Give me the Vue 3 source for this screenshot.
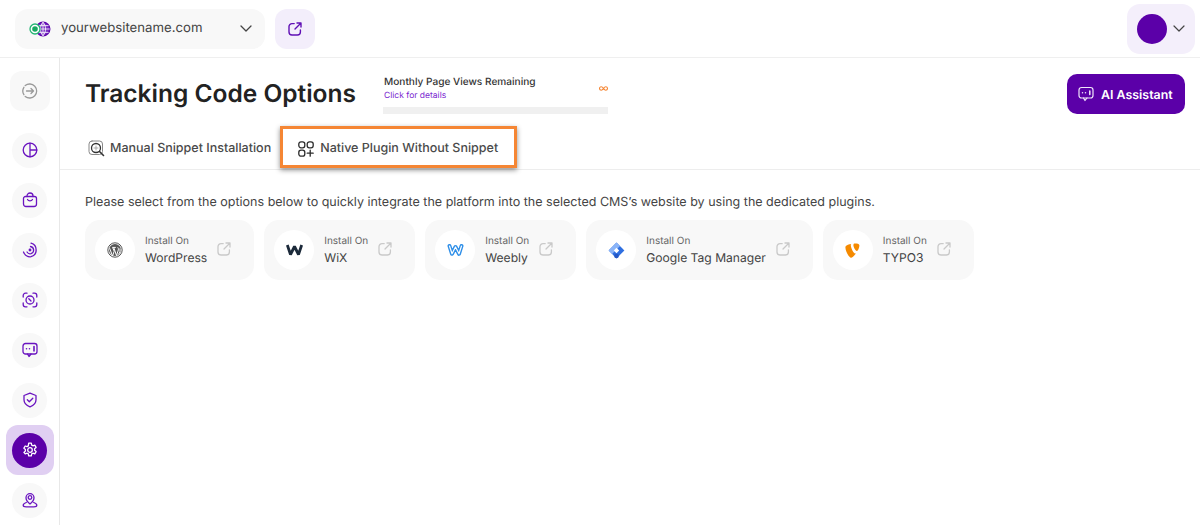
<script setup>
const navIcons = [
  { id: 'pie', active: false },
  { id: 'bag', active: false },
  { id: 'signal', active: false },
  { id: 'scan', active: false },
  { id: 'chat', active: false },
  { id: 'shield', active: false },
  { id: 'gear', active: true },
  { id: 'pin', active: false }
]
const cards = [
  { id: 'wp', name: 'WordPress' },
  { id: 'wix', name: 'WiX' },
  { id: 'weebly', name: 'Weebly' },
  { id: 'gtm', name: 'Google Tag Manager' },
  { id: 'typo', name: 'TYPO3' }
]
</script>

<template>
  <div class="page">
    <header class="topbar">
      <div class="site-select">
        <svg class="globe" width="22" height="16" viewBox="0 0 22 16" fill="none">
          <circle cx="14" cy="8" r="6.8" stroke="#5f08ad" stroke-width="1.4" fill="#7a2fc4"/>
          <path d="M14 1.2v13.6M7.2 8h13.6M8.4 4.6h11.2M8.4 11.4h11.2M14 1.2c-3.4 3.8-3.4 9.8 0 13.6M14 1.2c3.4 3.8 3.4 9.8 0 13.6" stroke="#fff" stroke-width=".8"/>
          <circle cx="6" cy="8" r="5" fill="#fff" stroke="#22b573" stroke-width="1.3"/>
          <circle cx="6" cy="8" r="2.8" fill="#18a862"/>
        </svg>
        <span class="site-name">yourwebsitename.com</span>
        <svg class="chev" width="12" height="7" viewBox="0 0 12 7" fill="none"><path d="M1 1l5 5 5-5" stroke="#444" stroke-width="1.3" stroke-linecap="round" stroke-linejoin="round"/></svg>
      </div>
      <button class="open-btn" type="button">
        <svg width="14" height="14" viewBox="0 0 14 14" fill="none" stroke="#6010b5" stroke-width="1.4" stroke-linecap="round" stroke-linejoin="round">
          <path d="M6.2 1.6H4A3 3 0 0 0 1 4.6V10a3 3 0 0 0 3 3h5.4a3 3 0 0 0 3-3V8"/>
          <path d="M7 7l6-6M9 1h4v4"/>
        </svg>
      </button>
      <div class="user-box">
        <span class="avatar"></span>
        <svg width="12" height="7" viewBox="0 0 12 7" fill="none"><path d="M1 1l5 5 5-5" stroke="#444" stroke-width="1.2" stroke-linecap="round" stroke-linejoin="round"/></svg>
      </div>
    </header>

    <div class="body">
      <aside class="sidebar">
        <button class="collapse" type="button">
          <svg width="16" height="16" viewBox="0 0 16 16" fill="none" stroke="#9a9a9a" stroke-width="1.3" stroke-linecap="round" stroke-linejoin="round">
            <path d="M3.2 2.6a7 7 0 1 1 0 10.8"/>
            <path d="M1.9 4.3A7 7 0 0 0 1.9 11.7"/>
            <path d="M4.5 8h7M9 5.5 11.5 8 9 10.5"/>
          </svg>
        </button>
        <div class="nav">
          <div v-for="item in navIcons" :key="item.id" class="nav-slot" :class="{ active: item.active }">
            <span class="nav-circle">
              <svg width="16" height="16" viewBox="0 0 16 16" fill="none" :stroke="item.active ? '#fff' : '#6a14c0'" stroke-width="1.3" stroke-linecap="round" stroke-linejoin="round">
                <template v-if="item.id === 'pie'">
                  <circle cx="8" cy="8" r="6.8"/><path d="M8 1.2v13.6M8 8h6.8"/>
                </template>
                <template v-else-if="item.id === 'bag'">
                  <path d="M3.5 4.5h9a2 2 0 0 1 2 2V12a2.5 2.5 0 0 1-2.5 2.5H4A2.5 2.5 0 0 1 1.5 12V6.5a2 2 0 0 1 2-2z"/>
                  <path d="M5 4.5V4a3 3 0 0 1 6 0v.5M5.500 7.500c1 1.700 4 1.700 5 0"/>
                </template>
                <template v-else-if="item.id === 'signal'">
                  <path d="M9 1.200a7 7 0 0 1 0 13.500A7 7 0 0 1 1.500 10"/>
                  <path d="M8.500 4.500a3.700 3.700 0 0 1 .5 7.200A3.700 3.700 0 0 1 5 10"/>
                  <circle cx="8" cy="8" r=".8" fill="#6a14c0"/>
                </template>
                <template v-else-if="item.id === 'scan'">
                  <path d="M1.200 5V3.500a2.300 2.300 0 0 1 2.300-2.300H5M11 1.200h1.500a2.300 2.300 0 0 1 2.300 2.300V5M14.800 11v1.500a2.300 2.300 0 0 1-2.300 2.300H11M5 14.800H3.500a2.300 2.300 0 0 1-2.300-2.300V11"/>
                  <circle cx="8" cy="8" r="4"/><path d="M6.800 6.800 9 9"/>
                </template>
                <template v-else-if="item.id === 'chat'">
                  <rect x="1" y="1.500" width="14" height="10.500" rx="2.500"/>
                  <path d="M5.500 12l1.500 2.500L9 12"/>
                  <path d="M4.500 6.800h.01M7.500 6.800h.01M12 4.500v4.500" stroke-width="1.600"/>
                </template>
                <template v-else-if="item.id === 'shield'">
                  <path d="M8 1.200 2 3.500v4.300c0 3.300 2.500 5.800 6 7 3.500-1.200 6-3.700 6-7V3.500z"/>
                  <path d="M5.300 7.800 7.300 9.800 10.800 6.200"/>
                </template>
                <template v-else-if="item.id === 'gear'">
                  <circle cx="8" cy="8" r="2.300"/>
                  <path d="M6.700 1.200h2.600l.4 1.900 1.200.7 1.900-.6 1.300 2.200-1.500 1.300v1.600l1.500 1.300-1.300 2.200-1.900-.6-1.200.7-.4 1.900H6.700l-.4-1.900-1.200-.7-1.900.6L1.900 10.400l1.500-1.300V7.500L1.900 6.200l1.300-2.200 1.900.6 1.200-.7z"/>
                </template>
                <template v-else>
                  <circle cx="8" cy="5.500" r="1.800"/>
                  <path d="M8 12c-2.500-2-4-4-4-6.300a4 4 0 0 1 8 0C12 8 10.500 10 8 12z"/>
                  <path d="M4.300 10.500C2.500 11.200 1.200 12.200 1.200 13.200c0 1 1.500 1.600 3 1.600h7.600c1.500 0 3-.6 3-1.600 0-1-1.300-2-3.100-2.700"/>
                </template>
              </svg>
            </span>
          </div>
        </div>
      </aside>

      <main class="main">
        <section class="head">
          <h1 class="title">Tracking Code Options</h1>
          <div class="stats">
            <div class="stats-row">
              <div class="stats-copy">
                <div class="stats-label">Monthly Page Views Remaining</div>
                <div class="stats-link">Click for details</div>
              </div>
              <svg class="inf" width="9" height="5" viewBox="0 0 9 5" fill="none"><path d="M4.500 2.500C3.600 1.200 2.900.8 2.200.8a1.700 1.700 0 0 0 0 3.400c.7 0 1.400-.4 2.300-1.700.9-1.300 1.600-1.700 2.300-1.700a1.700 1.700 0 0 1 0 3.400c-.7 0-1.400-.4-2.300-1.700z" stroke="#f58634" stroke-width="1.100"/></svg>
            </div>
            <div class="stats-bar"></div>
          </div>
          <button class="ai-btn" type="button">
            <svg width="16" height="16" viewBox="0 0 16 16" fill="none" stroke="#f0e6fa" stroke-width="1.200" stroke-linecap="round" stroke-linejoin="round">
              <rect x="1" y="1.500" width="14" height="10.500" rx="2.500"/>
              <path d="M5.500 12l1.500 2.500L9 12"/>
              <path d="M4.500 6.800h.01M7.500 6.800h.01M11.800 5v3.500" stroke-width="1.500"/>
            </svg>
            <span>AI Assistant</span>
          </button>
        </section>

        <nav class="tabs">
          <div class="tab first">
            <svg width="17" height="17" viewBox="0 0 17 17" fill="none" stroke="#333" stroke-linecap="round">
              <rect x="1" y="1" width="13.500" height="13.500" rx="3" stroke="#888" stroke-width="1"/>
              <circle cx="8" cy="8" r="4.500" stroke-width="1.300"/>
              <path d="M6 8h4M8 6v4" stroke="#999" stroke-width=".8"/>
              <path d="M11.500 11.500 15.500 15.500" stroke-width="1.600"/>
            </svg>
            <span>Manual Snippet Installation</span>
          </div>
          <div class="tab highlighted">
            <svg width="16" height="16" viewBox="0 0 16 16" fill="none" stroke="#2b2b2b" stroke-width="1.300" stroke-linecap="round">
              <rect x=".8" y=".8" width="6" height="6" rx="2.200"/>
              <rect x="9.200" y=".8" width="6" height="6" rx="2.200"/>
              <rect x=".8" y="9.200" width="6" height="6" rx="2.200"/>
              <path d="M12.200 9.200v6M9.200 12.200h6"/>
            </svg>
            <span>Native Plugin Without Snippet</span>
          </div>
        </nav>

        <p class="intro">Please select from the options below to quickly integrate the platform into the selected CMS’s website by using the dedicated plugins.</p>

        <div class="cards">
          <div v-for="card in cards" :key="card.id" class="card">
            <span class="logo">
              <svg v-if="card.id === 'wp'" width="16" height="16" viewBox="0 0 16 16" fill="none">
                <circle cx="8" cy="8" r="7.200" stroke="#555" stroke-width="1"/>
                <circle cx="8" cy="8" r="6" fill="#555"/>
                <path d="M2.600 6.200 5.500 14l1.700-4.800-1.500-3.500M5.300 5.400h3.500M6.800 5.600l2.700 8 1.800-5.600c.4-1.300-.2-2-.6-2.700M12.800 6.500c.6 2 .3 3.900-1.400 6" stroke="#fff" stroke-width="1"/>
              </svg>
              <svg v-else-if="card.id === 'wix'" width="17" height="12" viewBox="0 0 17 12" fill="none">
                <path d="M1.300 1 4.500 10.500 8.500 2.500 12.500 10.500 15.700 1" stroke="#1c2a3a" stroke-width="2.800" stroke-linejoin="bevel"/>
              </svg>
              <svg v-else-if="card.id === 'weebly'" width="17" height="14" viewBox="0 0 17 14" fill="none" stroke-linecap="round" stroke-linejoin="round">
                <path d="M2.500 3 5 10.800 8.500 4 12 10.800 14.500 3" stroke="#2f8fe8" stroke-width="4"/>
                <path d="M2.500 3 5 10.800 8.500 4 12 10.800 14.500 3" stroke="#fff" stroke-width="1.200"/>
              </svg>
              <svg v-else-if="card.id === 'gtm'" width="17" height="17" viewBox="0 0 17 17">
                <path d="M8.500 .6 16.400 8.500 8.500 16.400 .6 8.500z" fill="#2f6fe0"/>
                <path d="M8.500 .6 12 4.100 4.100 12 .6 8.500z" fill="#8ab4f8"/>
                <path d="M8.500 5.800 11.200 8.500 8.500 11.200 5.800 8.500z" fill="#fff"/>
                <circle cx="8.500" cy="14" r="2.300" fill="#2457c5"/>
              </svg>
              <svg v-else width="15" height="15" viewBox="0 0 15 15">
                <path d="M11 10.500c-.3.100-.5.100-.8.100-1.800 0-4.400-6.200-4.400-8.300 0-.8.200-1 .4-1.200C4 1.400 1.500 2.200.7 3.200.5 3.500.4 3.900.4 4.500c0 3.100 3.300 10.200 5.700 10.200 1.100 0 2.900-1.800 4.900-4.200z" fill="#f58a00"/>
                <path d="M9.900.5c2.200 0 4.500.4 4.500 1.700 0 2.700-1.700 5.900-2.600 5.900C10.300 8.100 8.400 3.800 8.400 2.300 8.400 .9 9 .5 9.900.5z" fill="#f58a00"/>
              </svg>
            </span>
            <div class="card-text">
              <div class="card-sub">Install On</div>
              <div class="card-name">{{ card.name }}</div>
            </div>
            <svg class="ext" width="14" height="14" viewBox="0 0 14 14" fill="none" stroke="#c9c9c9" stroke-width="1.300" stroke-linecap="round" stroke-linejoin="round">
              <path d="M6.200 1.600H4A3 3 0 0 0 1 4.600V10a3 3 0 0 0 3 3h5.400a3 3 0 0 0 3-3V8"/>
              <path d="M7 7l6-6M9 1h4v4"/>
            </svg>
          </div>
        </div>
      </main>
    </div>
  </div>
</template>

<style scoped>
.page {
  width: 1200px;
  height: 525px;
  overflow: hidden;
  background: #fff;
  font-family: Inter, "Liberation Sans", sans-serif;
  color: #333;
  text-rendering: geometricPrecision;
}
button { border: 0; padding: 0; font-family: inherit; cursor: pointer; text-rendering: geometricPrecision; }
.topbar {
  height: 57px;
  border-bottom: 1px solid #efefef;
  display: flex;
  align-items: center;
  padding: 0 5px 0 15px;
  box-sizing: content-box;
}
.site-select {
  width: 250px;
  height: 40px;
  box-sizing: border-box;
  background: #f8f8f8;
  border-radius: 13px;
  display: flex;
  align-items: center;
  padding: 0 13px 0 14px;
}
.globe { flex: none; }
.site-name {
  margin-left: 10px;
  margin-bottom: 1px;
  font-size: 13.2px;
  color: #444;
  flex: 1;
}
.open-btn {
  width: 40px;
  height: 40px;
  margin-left: 10px;
  border-radius: 12px;
  background: #f3eefb;
  display: flex;
  align-items: center;
  justify-content: center;
}
.user-box {
  margin-left: auto;
  width: 68px;
  height: 50px;
  border-radius: 13px;
  background: #f4effb;
  display: flex;
  align-items: center;
  padding-left: 10px;
  box-sizing: border-box;
  gap: 6px;
}
.avatar {
  width: 30px;
  height: 30px;
  border-radius: 50%;
  background: #5b00a8;
}
.body { display: flex; height: 467px; }
.sidebar {
  width: 59px;
  border-right: 1px solid #e8e8e8;
  box-sizing: content-box;
  display: flex;
  flex-direction: column;
  align-items: center;
  padding-top: 13px;
}
.collapse {
  width: 40px;
  height: 40px;
  border-radius: 12px;
  background: #f8f8f8;
  display: flex;
  align-items: center;
  justify-content: center;
}
.nav {
  margin-top: 14px;
  display: flex;
  flex-direction: column;
  align-items: center;
}
.nav-slot {
  width: 48px;
  height: 50px;
  border-radius: 12px;
  display: flex;
  align-items: center;
  justify-content: center;
}
.nav-slot.active { background: #e0cff2; }
.nav-circle {
  width: 35px;
  height: 35px;
  border-radius: 50%;
  background: #f8f8f8;
  display: flex;
  align-items: center;
  justify-content: center;
}
.active .nav-circle { background: #5b00a8; }
.main { flex: 1; min-width: 0; }
.head {
  display: flex;
  align-items: flex-start;
  padding: 16px 15px 0 25px;
  height: 67px;
  box-sizing: border-box;
}
.title {
  margin: 3px 0 0;
  font-size: 24.5px;
  line-height: 32px;
  font-weight: 600;
  color: #222;
  width: 298px;
  white-space: nowrap;
}
.stats { width: 225px; }
.stats-row {
  display: flex;
  justify-content: space-between;
  align-items: flex-start;
  padding-left: 1px;
  height: 26px;
  box-sizing: border-box;
}
.stats-copy { padding-top: 1px; }
.stats-label {
  font-size: 10.1px;
  font-weight: 500;
  line-height: 14px;
  color: #333;
}
.stats-link {
  margin-top: 1px;
  font-size: 8.5px;
  line-height: 12px;
  color: #7a1fd0;
}
.inf { margin-top: 11.5px; }
.stats-bar {
  height: 7px;
  margin-top: 7px;
  background: #f0f0f0;
}
.ai-btn {
  margin-left: auto;
  width: 118px;
  height: 40px;
  border-radius: 10px;
  background: #5b00a8;
  color: #fff;
  font-size: 12.4px;
  font-weight: 600;
  display: flex;
  align-items: center;
  gap: 7px;
  padding-left: 11px;
  box-sizing: border-box;
}
.tabs {
  height: 45px;
  border-bottom: 1px solid #ededed;
  display: flex;
  align-items: flex-start;
  padding-left: 28px;
  box-sizing: border-box;
}
.tab {
  display: flex;
  align-items: center;
  font-size: 12.5px;
  font-weight: 500;
  color: #4a4a4a;
}
.tab.first { gap: 5px; height: 42px; margin-top: 2px; }
.tab.highlighted {
  width: 237px;
  height: 42px;
  margin-left: 9px;
  margin-top: 1px;
  padding-top: 3px;
  box-sizing: border-box;
  border: 3px solid #f58634;
  box-shadow: 0 2px 5px rgba(0, 0, 0, .45);
  background: #fff;
  padding-left: 15px;
  gap: 6px;
}
.intro {
  margin: 25px 0 0 25px;
  font-size: 12.53px;
  line-height: 16px;
  color: #444;
}
.cards {
  margin: 9px 0 0 25px;
  display: flex;
  gap: 10px;
}
.card {
  height: 60px;
  border-radius: 15px;
  background: #f8f8f8;
  display: flex;
  align-items: center;
  padding: 0 23px 0 10px;
  box-sizing: border-box;
}
.logo {
  width: 40px;
  height: 40px;
  border-radius: 50%;
  background: #fff;
  display: flex;
  align-items: center;
  justify-content: center;
  flex: none;
}
.card-text { margin-left: 10px; }
.card-sub {
  font-size: 10px;
  line-height: 14px;
  color: #666;
}
.card-name {
  font-size: 12.1px;
  line-height: 18px;
  margin-top: 1px;
  color: #444;
  white-space: nowrap;
}
.ext { margin-left: 10px; margin-top: -3px; flex: none; }
</style>
